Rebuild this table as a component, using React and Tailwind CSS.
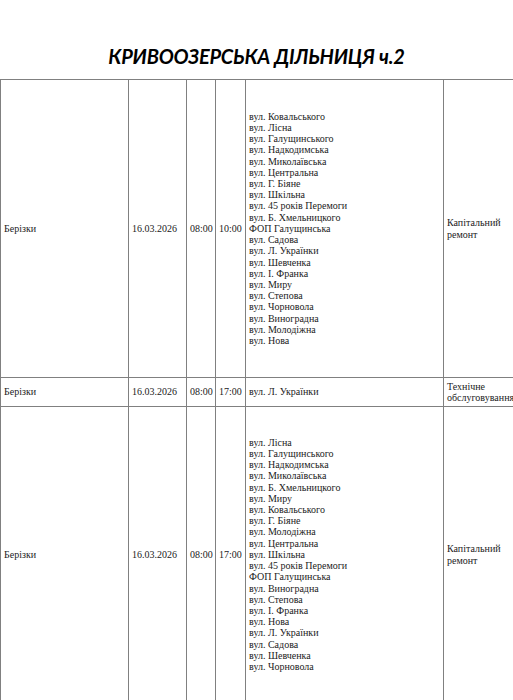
import React from "react";

const rows = [
  {
    place: "Берізки",
    date: "16.03.2026",
    from: "08:00",
    to: "10:00",
    height: "h-[298px]",
    streets: [
      "вул. Ковальського",
      "вул. Лісна",
      "вул. Галущинського",
      "вул. Надкодимська",
      "вул. Миколаївська",
      "вул. Центральна",
      "вул. Г. Біяне",
      "вул. Шкільна",
      "вул. 45 років Перемоги",
      "вул. Б. Хмельницкого",
      "ФОП Галущинська",
      "вул. Садова",
      "вул. Л. Українки",
      "вул. Шевченка",
      "вул. І. Франка",
      "вул. Миру",
      "вул. Степова",
      "вул. Чорновола",
      "вул. Виноградна",
      "вул. Молодіжна",
      "вул. Нова",
    ],
    kind: "Капітальний ремонт",
  },
  {
    place: "Берізки",
    date: "16.03.2026",
    from: "08:00",
    to: "17:00",
    height: "h-[29px]",
    streets: ["вул. Л. Українки"],
    kind: "Технічне обслуговування",
  },
  {
    place: "Берізки",
    date: "16.03.2026",
    from: "08:00",
    to: "17:00",
    height: "h-[296px]",
    streets: [
      "вул. Лісна",
      "вул. Галущинського",
      "вул. Надкодимська",
      "вул. Миколаївська",
      "вул. Б. Хмельницкого",
      "вул. Миру",
      "вул. Ковальського",
      "вул. Г. Біяне",
      "вул. Молодіжна",
      "вул. Центральна",
      "вул. Шкільна",
      "вул. 45 років Перемоги",
      "ФОП Галущинська",
      "вул. Виноградна",
      "вул. Степова",
      "вул. І. Франка",
      "вул. Нова",
      "вул. Л. Українки",
      "вул. Садова",
      "вул. Шевченка",
      "вул. Чорновола",
    ],
    kind: "Капітальний ремонт",
  },
];

const cell = "border border-[#808080] align-middle px-[3px] py-0";

export default function App() {
  return (
    <div className="w-[513px] min-h-[700px] overflow-hidden bg-white text-[#222]">
      {/* Title */}
      <div className="h-[79px] flex items-center justify-center pt-[32px]">
        <h1 className="font-['Lato','Liberation_Sans',sans-serif] font-bold italic text-[20px] leading-none text-black tracking-[-0.2px]">
          КРИВООЗЕРСЬКА ДІЛЬНИЦЯ ч.2
        </h1>
      </div>

      {/* Schedule table */}
      <table className="border-collapse table-fixed w-[530px] font-['Liberation_Serif',serif] text-[10px] leading-[11.2px]">
        <colgroup>
          <col className="w-[128px]" />
          <col className="w-[58px]" />
          <col className="w-[29px]" />
          <col className="w-[30px]" />
          <col className="w-[198px]" />
          <col className="w-[87px]" />
        </colgroup>
        <tbody>
          {rows.map((r, i) => (
            <tr key={i} className={r.height}>
              <td className={cell}>{r.place}</td>
              <td className={cell}>{r.date}</td>
              <td className={cell}>{r.from}</td>
              <td className={cell}>{r.to}</td>
              <td className={cell}>
                {r.streets.map((s, j) => (
                  <div key={j}>{s}</div>
                ))}
              </td>
              <td className={cell}>{r.kind}</td>
            </tr>
          ))}
        </tbody>
      </table>
    </div>
  );
}
